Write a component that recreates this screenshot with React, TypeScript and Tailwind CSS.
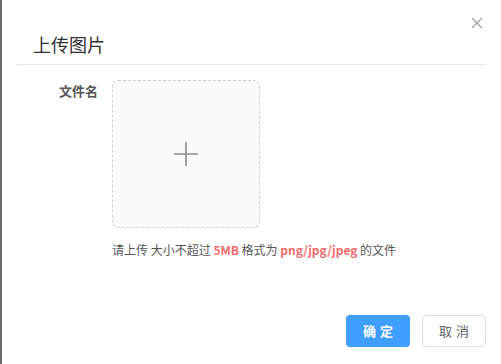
import React from "react";

export default function App() {
  return (
    <div
      className="w-[501px] h-[364px] bg-white border-l-2 border-[#6b6b6b] relative overflow-hidden"
      style={{ fontFamily: '"Noto Sans CJK SC", "Liberation Sans", sans-serif' }}
    >
      <button className="absolute right-[18px] top-[17px] text-[#a0a0a0]">
        <svg width="12" height="12" viewBox="0 0 12 12" fill="none" stroke="currentColor" strokeWidth="1.2">
          <path d="M1 1L11 11M11 1L1 11" />
        </svg>
      </button>

      <div className="pl-[31px] pt-[32px] pb-[8px]">
        <h2 className="text-[18px] leading-[24px] text-[#303133]">上传图片</h2>
      </div>
      <div className="mx-[15px] h-px bg-[#e6e6e6]" />

      <div className="flex pt-[15px]">
        <div className="w-[110px] pr-[14px] text-right text-[13px] leading-[22px] font-bold text-[#555]">
          文件名
        </div>
        <div className="flex flex-col">
          <div className="w-[148px] h-[148px] border border-dashed border-[#d0d0d0] rounded-[6px] bg-[#fafafa] flex items-center justify-center">
            <svg width="26" height="26" viewBox="0 0 26 26" fill="none" stroke="#8c8c8c" strokeWidth="1.6">
              <path d="M13 1V25M1 13H25" />
            </svg>
          </div>
          <p className="mt-[13px] text-[12px] leading-[18px] text-[#555] whitespace-nowrap">
            请上传 大小不超过 <span className="font-bold text-[#f56c6c]">5MB</span> 格式为{" "}
            <span className="font-bold text-[#f56c6c]">png/jpg/jpeg</span> 的文件
          </p>
        </div>
      </div>

      <div className="absolute right-[15px] bottom-[17px] flex gap-[12px]">
        <button className="w-[64px] h-[32px] rounded-[4px] bg-[#409eff] text-white text-[13px] font-bold tracking-[4px] pl-[4px]">
          确定
        </button>
        <button className="w-[64px] h-[32px] rounded-[4px] border border-[#dcdfe6] bg-white text-[#606266] text-[13px] tracking-[4px] pl-[4px]">
          取消
        </button>
      </div>
    </div>
  );
}
